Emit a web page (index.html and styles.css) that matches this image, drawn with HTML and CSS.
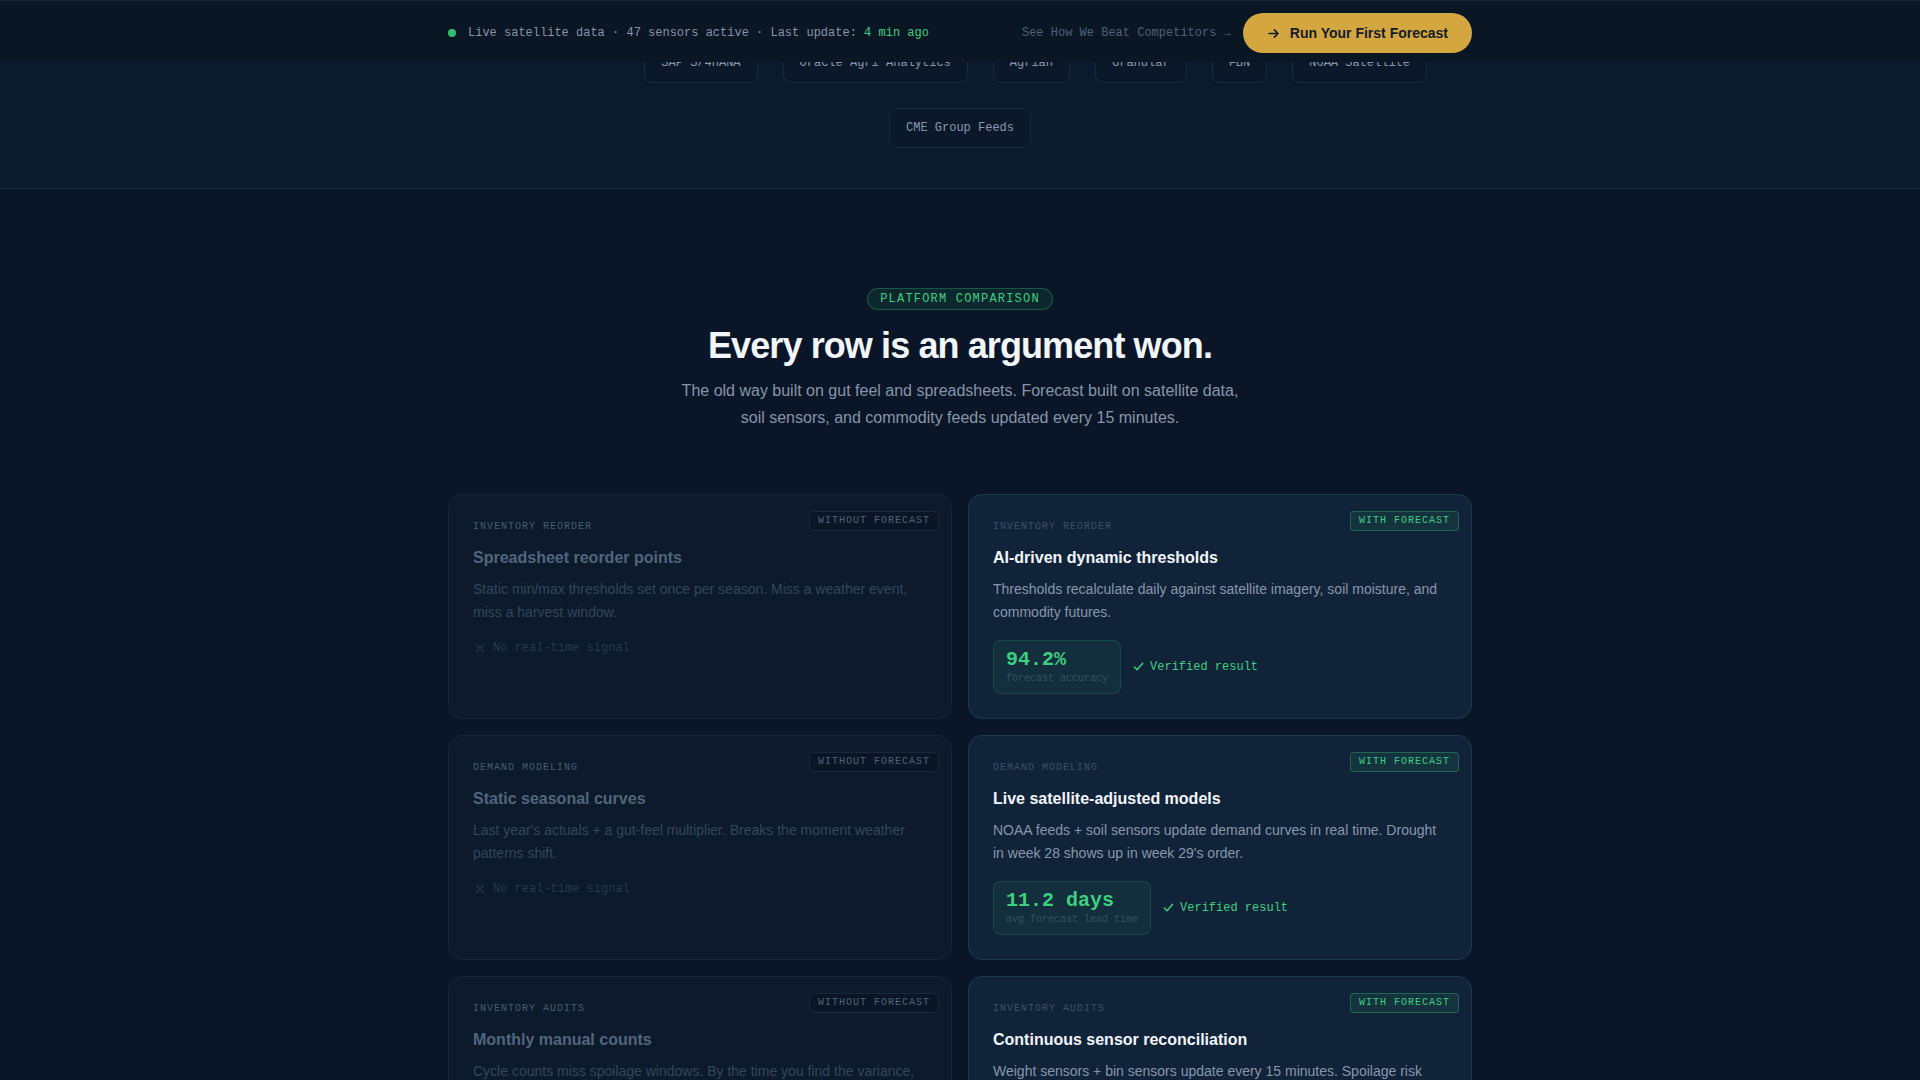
FILE: index.html
```html
<!DOCTYPE html>
<html lang="en">

<head>
    <meta charset="UTF-8">
    <title>Forecast - Platform Comparison</title>

    <link rel="stylesheet" href="styles.css">
</head>

<body>
    <header class="topbar">
        <div class="topbar-inner">
            <div class="status">
                <span class="dot"></span>
                <span>Live satellite data · 47 sensors active · Last update: <span class="fresh">4 min ago</span></span>
            </div>
            <div class="topbar-actions">
                <a class="link-muted" href="#compare">See How We Beat Competitors →</a>
                <a class="btn-gold" href="#">
                    <svg width="13" height="13" viewBox="0 0 16 16" fill="none" stroke="currentColor" stroke-width="2" stroke-linecap="round" stroke-linejoin="round">
                        <path d="M2.5 8h11M9 3.5 13.5 8 9 12.5" />
                    </svg>
                    Run Your First Forecast
                </a>
            </div>
        </div>
    </header>

    <section class="integrations">
        <div class="chips">
            <span class="chips-label">Integrates with →</span>
            <span class="chip">SAP S/4HANA</span>
            <span class="chip">Oracle Agri Analytics</span>
            <span class="chip">Agrian</span>
            <span class="chip">Granular</span>
            <span class="chip">FBN</span>
            <span class="chip">NOAA Satellite</span>
            <span class="chip">CME Group Feeds</span>
        </div>
    </section>

    <section class="compare" id="compare">
        <div class="compare-head">
            <span class="eyebrow">Platform Comparison</span>
            <h2>Every row is an argument won.</h2>
            <p>The old way built on gut feel and spreadsheets. Forecast built on satellite data, soil sensors, and commodity feeds updated every 15 minutes.</p>
        </div>

        <div class="compare-grid">
            <!-- row: reorder -->
            <article class="card card-old">
                <span class="tag">Without Forecast</span>
                <div class="card-label">Inventory Reorder</div>
                <h3>Spreadsheet reorder points</h3>
                <p>Static min/max thresholds set once per season. Miss a weather event, miss a harvest window.</p>
                <div class="no-signal">
                    <svg width="10" height="10" viewBox="0 0 10 10" stroke="currentColor" stroke-width="1.2" stroke-linecap="round">
                        <path d="M1.5 1.5l7 7M8.5 1.5l-7 7" />
                    </svg>
                    No real-time signal
                </div>
            </article>
            <article class="card card-new">
                <span class="tag">With Forecast</span>
                <div class="card-label">Inventory Reorder</div>
                <h3>AI-driven dynamic thresholds</h3>
                <p>Thresholds recalculate daily against satellite imagery, soil moisture, and commodity futures.</p>
                <div class="result">
                    <div class="metric">
                        <strong>94.2%</strong>
                        <span>forecast accuracy</span>
                    </div>
                    <span class="verified">
                        <svg width="11" height="11" viewBox="0 0 12 12" fill="none" stroke="currentColor" stroke-width="1.6" stroke-linecap="round" stroke-linejoin="round">
                            <path d="M1.5 6.5l3 3 6-7" />
                        </svg>
                        Verified result
                    </span>
                </div>
            </article>

            <!-- row: demand -->
            <article class="card card-old">
                <span class="tag">Without Forecast</span>
                <div class="card-label">Demand Modeling</div>
                <h3>Static seasonal curves</h3>
                <p>Last year's actuals + a gut-feel multiplier. Breaks the moment weather patterns shift.</p>
                <div class="no-signal">
                    <svg width="10" height="10" viewBox="0 0 10 10" stroke="currentColor" stroke-width="1.2" stroke-linecap="round">
                        <path d="M1.5 1.5l7 7M8.5 1.5l-7 7" />
                    </svg>
                    No real-time signal
                </div>
            </article>
            <article class="card card-new">
                <span class="tag">With Forecast</span>
                <div class="card-label">Demand Modeling</div>
                <h3>Live satellite-adjusted models</h3>
                <p>NOAA feeds + soil sensors update demand curves in real time. Drought in week 28 shows up in week 29's order.</p>
                <div class="result">
                    <div class="metric">
                        <strong>11.2 days</strong>
                        <span>avg forecast lead time</span>
                    </div>
                    <span class="verified">
                        <svg width="11" height="11" viewBox="0 0 12 12" fill="none" stroke="currentColor" stroke-width="1.6" stroke-linecap="round" stroke-linejoin="round">
                            <path d="M1.5 6.5l3 3 6-7" />
                        </svg>
                        Verified result
                    </span>
                </div>
            </article>

            <!-- row: audits -->
            <article class="card card-old">
                <span class="tag">Without Forecast</span>
                <div class="card-label">Inventory Audits</div>
                <h3>Monthly manual counts</h3>
                <p>Cycle counts miss spoilage windows. By the time you find the variance, the loss is already booked.</p>
                <div class="no-signal">
                    <svg width="10" height="10" viewBox="0 0 10 10" stroke="currentColor" stroke-width="1.2" stroke-linecap="round">
                        <path d="M1.5 1.5l7 7M8.5 1.5l-7 7" />
                    </svg>
                    No real-time signal
                </div>
            </article>
            <article class="card card-new">
                <span class="tag">With Forecast</span>
                <div class="card-label">Inventory Audits</div>
                <h3>Continuous sensor reconciliation</h3>
                <p>Weight sensors + bin sensors update every 15 minutes. Spoilage risk flagged before it hits the P&amp;L.</p>
                <div class="result">
                    <div class="metric">
                        <strong>-38%</strong>
                        <span>shrink variance</span>
                    </div>
                    <span class="verified">
                        <svg width="11" height="11" viewBox="0 0 12 12" fill="none" stroke="currentColor" stroke-width="1.6" stroke-linecap="round" stroke-linejoin="round">
                            <path d="M1.5 6.5l3 3 6-7" />
                        </svg>
                        Verified result
                    </span>
                </div>
            </article>
        </div>
    </section>
</body>

</html>
```

FILE: styles.css
```css
* {
    box-sizing: border-box;
}

body {
    margin: 0;
    background: #0a1627;
    color: #e2e8f0;
    font-family: "Liberation Sans", Arial, sans-serif;
}

a {
    text-decoration: none;
}

/* top bar */

.topbar {
    position: fixed;
    top: 0;
    left: 0;
    right: 0;
    z-index: 10;
    height: 62px;
    padding-top: 12px;
    background: #0a1624;
    border-top: 1px solid #16243a;
}

.topbar-inner {
    max-width: 1024px;
    margin: 0 auto;
    display: flex;
    align-items: center;
    justify-content: space-between;
}

.status {
    display: flex;
    align-items: center;
    gap: 12px;
    font-family: "Liberation Mono", monospace;
    font-size: 12px;
    color: #8595aa;
}

.dot {
    width: 8px;
    height: 8px;
    border-radius: 50%;
    background: #2fbf71;
}

.fresh {
    color: #3ecf7f;
}

.topbar-actions {
    display: flex;
    align-items: center;
    gap: 12px;
}

.link-muted {
    font-family: "Liberation Mono", monospace;
    font-size: 12px;
    color: #4d6079;
}

.btn-gold {
    display: flex;
    align-items: center;
    gap: 10px;
    height: 40px;
    padding: 0 24px;
    border-radius: 20px;
    background: #d4a640;
    color: #131c28;
    font-size: 14px;
    font-weight: bold;
}

/* integrations strip */

.integrations {
    background: #0c1a2d;
    padding: 43px 0 40px;
}

.chips {
    max-width: 1024px;
    margin: 0 auto;
    display: flex;
    flex-wrap: wrap;
    justify-content: center;
    gap: 25px;
}

.chips-label {
    align-self: flex-start;
    padding-left: 4px;
    font-family: "Liberation Mono", monospace;
    font-size: 12px;
    color: #4d6079;
}

.chip {
    padding: 10px 16px;
    border: 1px solid #1a2a3e;
    border-radius: 8px;
    background: #0b1829;
    font-family: "Liberation Mono", monospace;
    font-size: 12px;
    line-height: 18px;
    color: #8798ad;
}

/* comparison */

.compare {
    border-top: 1px solid #1a2a3d;
    padding: 99px 0 80px;
}

.compare-head {
    text-align: center;
}

.eyebrow {
    display: inline-block;
    margin-bottom: 14px;
    padding: 2px 12px;
    border: 1px solid rgba(52, 199, 116, 0.3);
    border-radius: 12px;
    background: rgba(52, 199, 116, 0.1);
    font-family: "Liberation Mono", monospace;
    font-size: 12px;
    line-height: 16px;
    letter-spacing: 0.1em;
    text-transform: uppercase;
    color: #3ecf7f;
}

.compare-head h2 {
    margin: 0 0 11px;
    font-size: 36px;
    line-height: 1.2;
    letter-spacing: -0.025em;
    color: #f1f5f9;
}

.compare-head p {
    max-width: 570px;
    margin: 0 auto;
    font-size: 16px;
    line-height: 1.65;
    color: #8595aa;
}

.compare-grid {
    max-width: 1024px;
    margin: 63px auto 0;
    display: grid;
    grid-template-columns: 1fr 1fr;
    gap: 16px;
}

.card {
    position: relative;
    padding: 24px;
    border-radius: 14px;
    border: 1px solid #15243a;
}

.card-old {
    background: #0c1a2b;
}

.card-new {
    background: #112339;
    border-color: #1d3a4a;
}

.tag {
    position: absolute;
    top: 16px;
    right: 12px;
    padding: 2px 8px;
    border: 1px solid #18273a;
    border-radius: 4px;
    background: #0a1626;
    font-family: "Liberation Mono", monospace;
    font-size: 10px;
    line-height: 14px;
    letter-spacing: 0.1em;
    text-transform: uppercase;
    color: #50627a;
}

.card-new .tag {
    border-color: rgba(52, 199, 116, 0.35);
    background: rgba(52, 199, 116, 0.1);
    color: #3ecf7f;
}

.card-label {
    font-family: "Liberation Mono", monospace;
    font-size: 10px;
    line-height: 15px;
    letter-spacing: 0.1em;
    text-transform: uppercase;
    color: #4a5b70;
}

.card-new .card-label {
    color: #3c4f66;
}

.card h3 {
    margin: 12px 0 8px;
    font-size: 16px;
    line-height: 24px;
    color: #52657e;
}

.card-new h3 {
    color: #f1f5f9;
}

.card p {
    margin: 0;
    font-size: 14px;
    line-height: 23px;
    color: #34465c;
}

.card-new p {
    color: #8796ab;
}

.no-signal {
    margin-top: 15px;
    display: flex;
    align-items: center;
    gap: 8px;
    padding-left: 2px;
    font-family: "Liberation Mono", monospace;
    font-size: 12px;
    line-height: 18px;
    color: #26384d;
}

.result {
    margin-top: 16px;
    display: flex;
    align-items: center;
    gap: 12px;
}

.metric {
    display: flex;
    flex-direction: column;
    padding: 7px 12px;
    border: 1px solid rgba(52, 199, 116, 0.18);
    border-radius: 8px;
    background: rgba(52, 199, 116, 0.07);
    font-family: "Liberation Mono", monospace;
}

.metric strong {
    font-size: 20px;
    line-height: 24px;
    color: #3ecf7f;
}

.metric span {
    font-size: 10px;
    line-height: 14px;
    color: #36525a;
}

.verified {
    display: flex;
    align-items: center;
    gap: 6px;
    font-family: "Liberation Mono", monospace;
    font-size: 12px;
    color: #3ecf7f;
}
```
